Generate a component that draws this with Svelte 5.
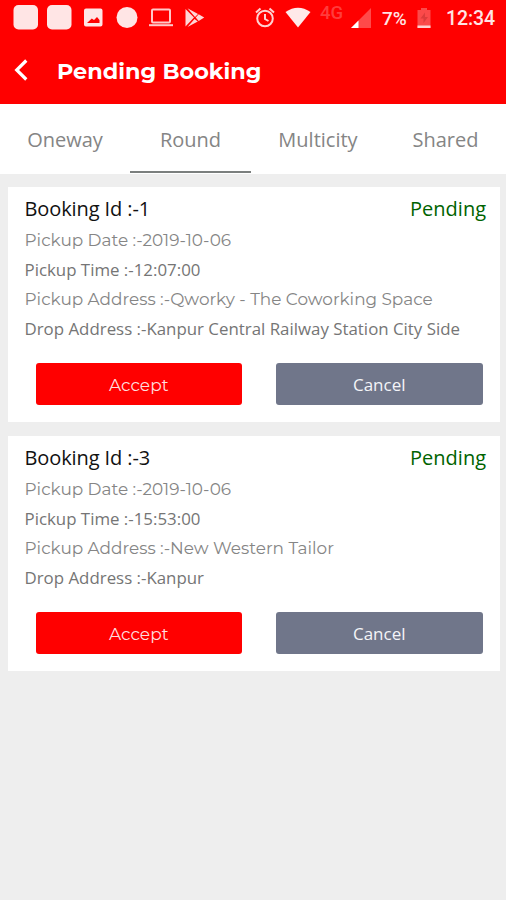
<script>
  const tabs = [
    { name: 'Oneway', width: 130 },
    { name: 'Round', width: 121 },
    { name: 'Multicity', width: 134 },
    { name: 'Shared', width: 121 }
  ];
  let active = $state('Round');
  const bookings = [
    { id: 1, date: '2019-10-06', time: '12:07:00', pickup: 'Qworky - The Coworking Space', drop: 'Kanpur Central Railway Station City Side' },
    { id: 3, date: '2019-10-06', time: '15:53:00', pickup: 'New Western Tailor', drop: 'Kanpur' }
  ];
</script>

<div class="screen">
  <header>
    <div class="status">
      <svg class="notices" width="210" height="36" viewBox="0 0 210 36" fill="#ffe5e5">
        <rect x="13.5" y="5" width="24.5" height="24.5" rx="5" />
        <rect x="47" y="5" width="24.5" height="24.5" rx="5" />
        <path fill-rule="evenodd" d="M86 8.500h14.500q2 0 2 2v14q0 2-2 2H86q-2 0-2-2v-14q0-2 2-2zM87 23h12.500v-3l-2.500-3-3 3-2.200-1.500z" />
        <circle cx="127" cy="17.5" r="10.5" />
        <g fill="none" stroke="#ffc8c8" stroke-width="2">
          <rect x="152" y="9.5" width="18" height="13" rx="1" />
          <path d="M149 25.200h24" />
        </g>
        <g fill="#ffd6d6">
          <path d="M185.500 9v17.500l8.500-9zM187.500 8.300l10.500 5.700-3 3zM187.500 27l7-8 3.300 2.500zM198.700 14.300l5.500 3.200-5.500 3.400-3-3.300z" />
        </g>
      </svg>
      <svg class="alarm" width="22" height="24" viewBox="0 0 22 24" fill="none" stroke="#ffd2d2" stroke-width="2">
        <circle cx="11" cy="13.5" r="7.800" />
        <path d="M11 9v5l3.500 2M2 7.500l4.500-4M20 7.500l-4.500-4" />
      </svg>
      <svg class="wifi" width="26" height="22" viewBox="0 0 26 22" fill="#ffe9e9">
        <path d="M.5 5Q13-3.500 25.500 5L13 20.500z" />
      </svg>
      <span class="net">4G</span>
      <svg class="signal" width="22" height="22" viewBox="0 0 22 22">
        <path d="M21 1v20H1z" fill="#ff4a4a" />
        <path d="M8.500 13.500V21H1z" fill="#fff" />
      </svg>
      <span class="percent">7%</span>
      <svg class="battery" width="14" height="22" viewBox="0 0 14 22">
        <path d="M4 1h6v2h3.500v18H.5V3H4z" fill="#fb4a4a" />
        <path d="M.5 18.500h13V21H.5z" fill="#ffd0d0" />
        <path d="M8 5.500L3.500 11.500h3v4.500l4.500-6H8z" fill="#dd3c3c" />
      </svg>
      <span class="clock">12:34</span>
    </div>
    <div class="bar">
      <svg width="16" height="24" viewBox="0 0 16 24" fill="none" stroke="#fff" stroke-width="3.200" aria-label="Back">
        <path d="M13.300 2.500L3.700 12l9.600 9.500" />
      </svg>
      <h1>Pending Booking</h1>
    </div>
  </header>

  <nav>
    {#each tabs as tab}
      <button class="tab" class:active={active === tab.name} style="width: {tab.width}px" onclick={() => (active = tab.name)}>{tab.name}</button>
    {/each}
  </nav>

  <main>
    {#each bookings as b}
      <article>
        <div class="head"><span>Booking Id :-{b.id}</span><span class="state">Pending</span></div>
        <p class="wide">Pickup Date :-{b.date}</p>
        <p>Pickup Time :-{b.time}</p>
        <p class="wide">Pickup Address :-{b.pickup}</p>
        <p>Drop Address :-{b.drop}</p>
        <div class="actions">
          <button class="accept">Accept</button>
          <button class="cancel">Cancel</button>
        </div>
      </article>
    {/each}
  </main>
</div>

<style>
  :global(body) { margin: 0; background: #eee; }
  .screen { width: 506px; height: 900px; overflow: hidden; background: #eee; font-family: 'Open Sans', sans-serif; }
  header { height: 104px; background: #f00; color: #fff; }
  .status { display: flex; height: 36px; align-items: flex-start; font-family: Roboto, sans-serif; color: #ffe4e4; }
  .status svg, .status span { flex: none; }
  .alarm { margin: 5px 0 0 44px; }
  .wifi { margin: 7px 0 0 9px; }
  .net { width: 26px; margin: 3px 0 0 9px; font-size: 18.500px; font-weight: 500; line-height: 20px; color: #ff3c3c; }
  .signal { margin: 7px 0 0 4px; }
  .percent { width: 27px; margin: 7px 0 0 10px; font-size: 19px; font-weight: 500; line-height: 23px; }
  .battery { margin: 7px 0 0 8px; }
  .clock { margin: 7px 0 0 15px; font-size: 19.500px; font-weight: 500; line-height: 23px; letter-spacing: -.1px; }
  .bar { display: flex; align-items: center; height: 68px; padding-left: 13px; box-sizing: border-box; }
  h1 { margin: 2px 0 0 28px; font: 700 22.350px/30px Montserrat, Inter, sans-serif; white-space: nowrap; }
  nav { display: flex; height: 70px; background: #fff; }
  button { border: 0; padding: 0; font-family: inherit; white-space: nowrap; }
  .tab { flex: none; height: 69px; padding-top: 4px; background: none; border-bottom: 2px solid transparent; font-size: 20px; color: #858585; }
  .tab.active { border-color: #7b7f7e; }
  main { display: flex; flex-direction: column; gap: 14px; padding: 13px 6px 0 7.500px; }
  article { height: 235px; box-sizing: border-box; padding: 8px 14px 0 17px; background: #fff; }
  .head { display: flex; justify-content: space-between; height: 30px; font-size: 20px; line-height: 28px; color: #111; }
  .head span:first-child { letter-spacing: -.1px; }
  .state { color: #006300; }
  p { margin: 0; height: 29.500px; font-size: 16.880px; line-height: 29px; color: #757575; white-space: nowrap; }
  .wide { font-family: Montserrat, Inter, sans-serif; line-height: 31px; color: #858585; }
  .actions { display: flex; gap: 34px; margin: 20px 0 0 11px; }
  .actions button { width: 206.500px; height: 42px; border-radius: 3px; color: #f4f4f8; font-size: 17px; }
  .actions .accept { padding-top: 2px; background: #f00; font-family: Montserrat, Inter, sans-serif; color: #ffdede; }
  .actions .cancel { background: #70768a; }
</style>
